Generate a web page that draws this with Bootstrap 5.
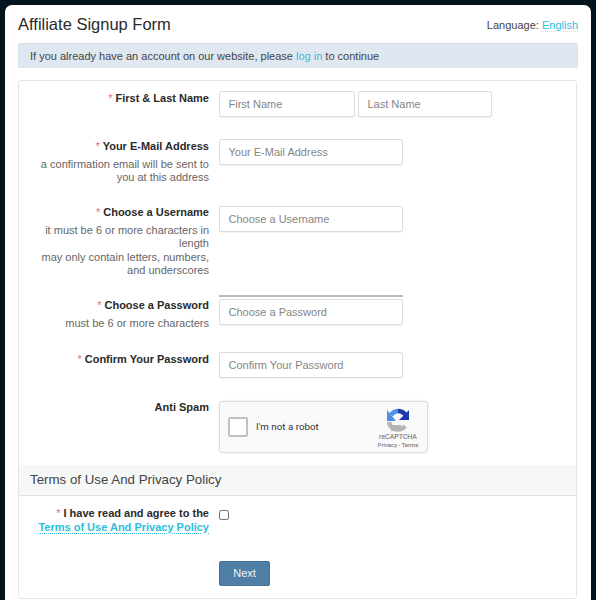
<!DOCTYPE html>
<html lang="en">
<head>
<meta charset="utf-8">
<title>Affiliate Signup Form</title>
<link href="https://cdn.jsdelivr.net/npm/bootstrap@5.3.0/dist/css/bootstrap.min.css" rel="stylesheet">
<style>
html,body{height:600px;overflow:hidden}
body{background:#04141e;font-family:"Liberation Sans",Arial,sans-serif;font-size:11px;line-height:13.3px;color:#333;padding:5px 5px 0}
.sheet{background:#fff;border-radius:7px 7px 0 0;height:595px;padding:0 13px}
.topline{height:38px;padding-top:7px}
.topline h1{font-size:16.5px;line-height:24px;margin:0;color:#2a2a2a;font-weight:400}
.lang{font-size:11px;line-height:24px;color:#444;padding-top:1px}
a{color:#2dbedc;text-decoration:none}
.lang a{text-decoration:underline dotted #bfe9f2;text-underline-offset:2px}
.notice{height:25px;background:#dfe8f1;border:1px solid #d8e2eb;border-radius:2px;padding:0 11px;line-height:24px;font-size:11px;margin-bottom:12px;color:#444}
.formbox{border:1px solid #e3e6e6;border-radius:3px;height:519px;width:559px;position:relative}
.frow{display:flex}
.lab{width:190px;flex:none;margin-right:10px;padding-left:18px;text-align:right;color:#666;line-height:13.3px}
.lab b{display:block;color:#2a2a2a;font-size:11px;line-height:14px;font-weight:700;margin-bottom:5px}
.lab i{font-style:normal;color:#d9756b;font-weight:400}
.fld{display:block;height:26px;border:1px solid #dadddf;border-radius:2px;padding:0 8.5px;font-size:11px;color:#333;background:#fff;box-shadow:0 1px 1px rgba(0,0,0,.05);outline:0;font-family:inherit}
.fld::placeholder{color:#858585;opacity:1}
.w-a{width:136px}.w-b{width:134px;margin-left:3px}.w-c{width:184px}
.r1{padding-top:10px;height:58px}
.r2{height:67px}
.r3{height:89px}
.r4{height:57px}
.r5{height:49px}
.pwrule{width:184px;height:2px;background:#b9bcbe;margin-bottom:2px}
.r4 .lab{padding-top:3px}
.lift{margin-top:-1px}
.capt{width:209px;height:52px;background:#f9f9f9;border:1px solid #dcdcdc;border-radius:3px;box-shadow:0 0 3px rgba(0,0,0,.08);display:flex;align-items:center;padding:0 8px;color:#333;font-family:Roboto,"Liberation Sans",sans-serif;font-size:9.8px}
.tick{width:20px;height:20px;border:2px solid #c1c1c1;border-radius:2px;background:#fff;margin-right:8px;flex:none}
.badgebox{margin-left:auto;margin-right:-1px;width:44px;text-align:center;color:#666;line-height:8px;font-size:7px;padding-top:2px}
.badgebox svg{display:block;margin:0 auto 1px}
.badgebox small{font-size:6px;display:block;line-height:8px;white-space:nowrap}
.termhead{height:31px;background:#f6f7f7;border-bottom:1px solid #dfe2e2;padding:0 11px;font-size:13.3px;line-height:30px;color:#444;margin-top:12px}
.agree{margin-top:10px;height:55px}
.agree .lab{padding-left:0}
.agree .lab b{margin:0}
.agree .lab a{display:block;font-weight:700;text-decoration:underline dotted;text-underline-offset:2px;line-height:15px}
.box{width:10px;height:10px;border:1px solid #767676;border-radius:2px;margin-top:4px}
.nxt{margin-left:200px;width:51px;height:25px;background:#4f7fa6;border:1px solid #457296;border-radius:2px;color:#eef3f7;font-size:11px;padding:0;line-height:23px;font-family:inherit}
</style>
</head>
<body>
<div class="sheet">
  <div class="topline d-flex justify-content-between align-items-start">
    <h1>Affiliate Signup Form</h1>
    <div class="lang">Language: <a href="#">English</a></div>
  </div>
  <div class="notice">If you already have an account on our website, please <a href="#">log in</a> to continue</div>
  <div class="formbox">
    <div class="frow r1">
      <div class="lab"><b><i>*</i> First &amp; Last Name</b></div>
      <input class="fld w-a" placeholder="First Name"><input class="fld w-b" placeholder="Last Name">
    </div>
    <div class="frow r2">
      <div class="lab"><b><i>*</i> Your E-Mail Address</b>a confirmation email will be sent to you at this address</div>
      <input class="fld w-c" placeholder="Your E-Mail Address">
    </div>
    <div class="frow r3">
      <div class="lab lift"><b><i>*</i> Choose a Username</b>it must be 6 or more characters in length<br>may only contain letters, numbers, and underscores</div>
      <input class="fld w-c" placeholder="Choose a Username">
    </div>
    <div class="frow r4">
      <div class="lab"><b><i>*</i> Choose a Password</b>must be 6 or more characters</div>
      <div><div class="pwrule"></div><input class="fld w-c" placeholder="Choose a Password"></div>
    </div>
    <div class="frow r5">
      <div class="lab"><b><i>*</i> Confirm Your Password</b></div>
      <input class="fld w-c" placeholder="Confirm Your Password">
    </div>
    <div class="frow">
      <div class="lab lift"><b>Anti Spam</b></div>
      <div class="capt">
        <span class="tick"></span><span>I'm not a robot</span>
        <div class="badgebox">
          <svg width="24" height="24" viewBox="0 0 24 24" fill="none" stroke-width="4.5">
            <path d="M3 14A9 9 0 0 0 19 18" stroke="#b4b4b4"/>
            <path d="M5 23h10v-6H5z" fill="#b4b4b4"/>
            <path d="M5 7A9 9 0 0 1 12 3" stroke="#4a90e2"/>
            <path d="M1 2v11h9z" fill="#4a90e2"/>
            <path d="M12 3A9 9 0 0 1 20 8" stroke="#1c3aa9"/>
            <path d="M23 2v10H13z" fill="#1c3aa9"/>
          </svg>
          reCAPTCHA<small>Privacy - Terms</small>
        </div>
      </div>
    </div>
    <div class="termhead">Terms of Use And Privacy Policy</div>
    <div class="frow agree">
      <div class="lab"><b><i>*</i> I have read and agree to the</b><a href="#">Terms of Use And Privacy Policy</a></div>
      <div class="box"></div>
    </div>
    <button class="nxt btn" type="button">Next</button>
  </div>
</div>
<script src="https://cdn.jsdelivr.net/npm/bootstrap@5.3.0/dist/js/bootstrap.bundle.min.js"></script>
</body>
</html>
